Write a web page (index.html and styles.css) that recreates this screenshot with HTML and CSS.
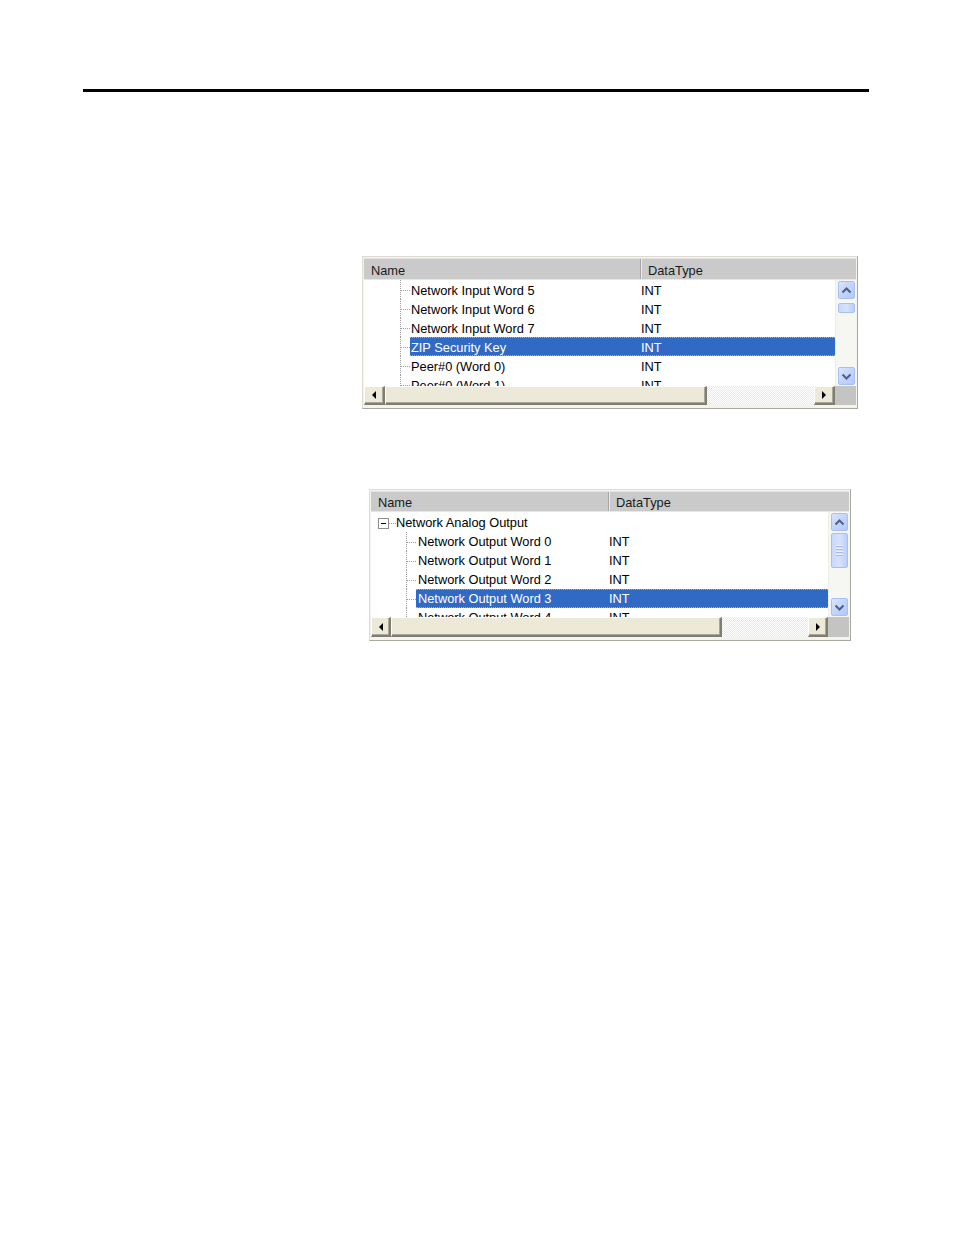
FILE: index.html
```html
<!DOCTYPE html>
<html>
<head>
<meta charset="utf-8">
<link rel="stylesheet" href="styles.css">
</head>
<body>
<div class="page">
  <div class="rule"></div>

  <div class="panel panel-a">
    <div class="header">
      <div class="hcol hname">Name</div>
      <div class="hcol htype">DataType</div>
    </div>
    <div class="list">
      <div class="row"><span class="tree"><span class="twig"></span></span><span class="cells"><span class="label">Network Input Word 5</span><span class="type">INT</span></span></div>
      <div class="row"><span class="tree"><span class="twig"></span></span><span class="cells"><span class="label">Network Input Word 6</span><span class="type">INT</span></span></div>
      <div class="row"><span class="tree"><span class="twig"></span></span><span class="cells"><span class="label">Network Input Word 7</span><span class="type">INT</span></span></div>
      <div class="row"><span class="tree"><span class="twig"></span></span><span class="cells selected"><span class="label">ZIP Security Key</span><span class="type">INT</span></span></div>
      <div class="row"><span class="tree"><span class="twig"></span></span><span class="cells"><span class="label">Peer#0 (Word 0)</span><span class="type">INT</span></span></div>
      <div class="row"><span class="tree"><span class="twig"></span></span><span class="cells"><span class="label">Peer#0 (Word 1)</span><span class="type">INT</span></span></div>
    </div>
    <div class="vscroll">
      <div class="vbtn"><svg width="11" height="7" viewBox="0 0 11 7"><polyline points="1.5,5.5 5.5,1.5 9.5,5.5" fill="none" stroke="#4d6185" stroke-width="2"/></svg></div>
      <div class="vthumb thumb-a"></div>
      <div class="vtrack"></div>
      <div class="vbtn"><svg width="11" height="7" viewBox="0 0 11 7"><polyline points="1.5,1.5 5.5,5.5 9.5,1.5" fill="none" stroke="#4d6185" stroke-width="2"/></svg></div>
    </div>
    <div class="hscroll">
      <div class="hbtn"><span class="tri-left"></span></div>
      <div class="hthumb"></div>
      <div class="htrack"></div>
      <div class="hbtn"><span class="tri-right"></span></div>
    </div>
    <div class="corner"></div>
  </div>

  <div class="panel panel-b">
    <div class="header">
      <div class="hcol hname">Name</div>
      <div class="hcol htype">DataType</div>
    </div>
    <div class="list">
      <div class="row parent"><span class="expander"><span class="minus"></span></span><span class="stub"></span><span class="plabel">Network Analog Output</span></div>
      <div class="row"><span class="tree"><span class="twig"></span></span><span class="cells"><span class="label">Network Output Word 0</span><span class="type">INT</span></span></div>
      <div class="row"><span class="tree"><span class="twig"></span></span><span class="cells"><span class="label">Network Output Word 1</span><span class="type">INT</span></span></div>
      <div class="row"><span class="tree"><span class="twig"></span></span><span class="cells"><span class="label">Network Output Word 2</span><span class="type">INT</span></span></div>
      <div class="row"><span class="tree"><span class="twig"></span></span><span class="cells selected"><span class="label">Network Output Word 3</span><span class="type">INT</span></span></div>
      <div class="row"><span class="tree"><span class="twig"></span></span><span class="cells"><span class="label">Network Output Word 4</span><span class="type">INT</span></span></div>
    </div>
    <div class="vscroll">
      <div class="vbtn"><svg width="11" height="7" viewBox="0 0 11 7"><polyline points="1.5,5.5 5.5,1.5 9.5,5.5" fill="none" stroke="#4d6185" stroke-width="2"/></svg></div>
      <div class="vthumb thumb-b"><span class="grip"></span><span class="grip"></span><span class="grip"></span><span class="grip"></span></div>
      <div class="vtrack"></div>
      <div class="vbtn"><svg width="11" height="7" viewBox="0 0 11 7"><polyline points="1.5,1.5 5.5,5.5 9.5,1.5" fill="none" stroke="#4d6185" stroke-width="2"/></svg></div>
    </div>
    <div class="hscroll">
      <div class="hbtn"><span class="tri-left"></span></div>
      <div class="hthumb"></div>
      <div class="htrack"></div>
      <div class="hbtn"><span class="tri-right"></span></div>
    </div>
    <div class="corner"></div>
  </div>
</div>
</body>
</html>
```

FILE: styles.css
```css
html, body {
  margin: 0;
  padding: 0;
  background: #ffffff;
}

.page {
  padding-top: 89px;
  display: flex;
  flex-direction: column;
  align-items: flex-start;
  font-family: "Liberation Sans", Arial, sans-serif;
  font-size: 12.8px;
  color: #000;
}

.rule {
  margin-left: 83px;
  width: 786px;
  height: 3px;
  background: #000;
}

/* ---------- panel frame ---------- */
.panel {
  display: grid;
  box-sizing: border-box;
  border-style: solid;
  border-width: 1px;
  border-color: #dedcd2 #a9a79e #a9a79e #dedcd2;
  background: #f4f3ee;
  padding: 1px 1px 3px 1px;
  overflow: hidden;
}

.panel-a {
  margin-top: 164px;
  margin-left: 362px;
  width: 496px;
  height: 153px;
  grid-template-columns: 471px 21px;
  grid-template-rows: 22px 106px 19px;
}

.panel-b {
  margin-top: 80px;
  margin-left: 369px;
  width: 482px;
  height: 152px;
  grid-template-columns: 457px 21px;
  grid-template-rows: 21px 105px 20px;
}

/* ---------- header ---------- */
.header {
  grid-column: 1 / 3;
  display: flex;
  background: #cacaca;
  border-top: 1px solid #e2e2e2;
  border-bottom: 1px solid #e6e6e6;
  box-sizing: border-box;
}

.hcol {
  display: flex;
  align-items: center;
  box-sizing: border-box;
  color: #1a1a1a;
  padding-top: 2px;
}

.hname {
  border-right: 1px solid #a6a6a6;
  box-shadow: 1px 0 0 #ececec;
}

.panel-a .hname { width: 277px; padding-left: 7px; }
.panel-a .htype { padding-left: 7px; }
.panel-b .hname { width: 238px; padding-left: 7px; }
.panel-b .htype { padding-left: 7px; }

/* ---------- list ---------- */
.list {
  background: #ffffff;
  overflow: hidden;
  display: flex;
  flex-direction: column;
}

.panel-b .list { padding-top: 1px; }

.row {
  height: 19px;
  flex: none;
  display: flex;
  align-items: stretch;
}

.tree {
  display: flex;
  justify-content: flex-end;
  flex: none;
}

.panel-a .tree { width: 46px; }
.panel-b .tree { width: 45px; }

.twig {
  width: 10px;
  border-left: 1px dotted #9c9c9c;
  box-sizing: border-box;
  display: flex;
  align-items: center;
}

.twig::before {
  content: "";
  flex: 1;
  border-top: 1px dotted #9c9c9c;
  margin-top: 1px;
}

.cells {
  flex: 1;
  display: flex;
  align-items: center;
  box-sizing: border-box;
  border-top: 1px solid transparent;
  border-bottom: 1px solid transparent;
}

.panel-a .cells { padding-top: 2px; }

.label {
  flex: none;
  box-sizing: border-box;
  white-space: nowrap;
}

.panel-a .label { width: 231px; padding-left: 1px; }
.panel-b .label { width: 193px; padding-left: 2px; }

.type { white-space: nowrap; }

.selected {
  background: #316ac5;
  color: #ffffff;
  border-top: 1px dotted #d7a94a;
  border-bottom: 1px dotted #d7a94a;
}

/* parent row */
.parent {
  align-items: center;
  padding-left: 7px;
}

.expander {
  width: 11px;
  height: 11px;
  box-sizing: border-box;
  border: 1px solid #8e8e8e;
  background: #ffffff;
  display: flex;
  align-items: center;
  justify-content: center;
  margin-top: 1px;
}

.minus {
  width: 5px;
  height: 1px;
  background: #000;
}

.stub {
  width: 7px;
  border-top: 1px dotted #9c9c9c;
  margin-top: 1px;
}

.plabel {
  padding-left: 0;
  white-space: nowrap;
}

/* ---------- vertical scroll (XP blue) ---------- */
.vscroll {
  background: #f6f6f3;
  display: flex;
  flex-direction: column;
  align-items: center;
  padding: 1px 0 1px 0;
  box-sizing: border-box;
  border-left: 1px solid #ededea;
}

.vbtn {
  width: 17px;
  height: 18px;
  flex: none;
  box-sizing: border-box;
  border: 1px solid #a8bff2;
  border-radius: 2px;
  background: linear-gradient(135deg, #dbe5fd 0%, #c3d4fb 50%, #b4c8f6 100%);
  display: flex;
  align-items: center;
  justify-content: center;
}

.vthumb {
  width: 17px;
  flex: none;
  box-sizing: border-box;
  border: 1px solid #a8bff2;
  border-radius: 2px;
  background: linear-gradient(90deg, #c9d8fc 0%, #d6e1fd 50%, #bdcff8 100%);
  display: flex;
  flex-direction: column;
  align-items: center;
  justify-content: center;
  gap: 1px;
}

.thumb-a { height: 10px; margin-top: 4px; }
.thumb-b { height: 35px; margin-top: 2px; }

.grip {
  width: 7px;
  height: 1px;
  background: #eef3fe;
  border-bottom: 1px solid #a4b9ec;
}

.vtrack { flex: 1; }

/* ---------- horizontal scroll (classic) ---------- */
.hscroll {
  display: flex;
  background-color: #ffffff;
  background-image: repeating-conic-gradient(#ebe9e0 0 25%, #ffffff 0 50%);
  background-size: 2px 2px;
}

.hbtn, .hthumb {
  box-sizing: border-box;
  background: #ece9d8;
  border-style: solid;
  border-width: 1px 2px 2px 1px;
  border-color: #ffffff #7f7d74 #7f7d74 #ffffff;
  box-shadow: inset -1px -1px 0 #aca899;
  flex: none;
}

.hbtn {
  display: flex;
  align-items: center;
  justify-content: center;
}

.panel-a .hbtn { width: 21px; }
.panel-a .hthumb { width: 322px; }
.panel-b .hbtn { width: 20px; }
.panel-b .hthumb { width: 331px; }

.htrack { flex: 1; }

.tri-left {
  width: 0;
  height: 0;
  border-top: 4px solid transparent;
  border-bottom: 4px solid transparent;
  border-right: 4px solid #000;
}

.tri-right {
  width: 0;
  height: 0;
  border-top: 4px solid transparent;
  border-bottom: 4px solid transparent;
  border-left: 4px solid #000;
}

.corner {
  background: #c4c4c2;
}
```
